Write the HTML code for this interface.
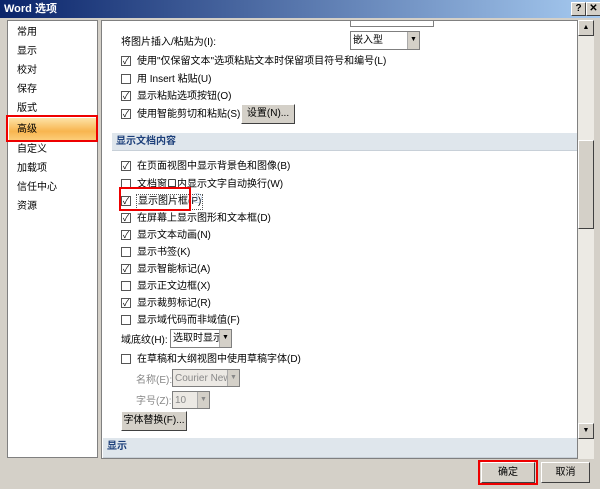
<!DOCTYPE html>
<html><head><meta charset="utf-8"><style>
*{margin:0;padding:0;box-sizing:border-box}
body{width:600px;height:489px;background:#d4d0c8;font-family:"Liberation Sans","Noto Sans CJK SC",sans-serif;font-size:10px;line-height:14px;color:#000;position:relative;overflow:hidden}
.a{position:absolute;white-space:nowrap}
.title{left:0;top:0;width:600px;height:18px;background:linear-gradient(90deg,#0a246a,#a6caf0);color:#fff;font-weight:bold;font-size:11px;padding:2px 4px}
.tb{top:2px;width:15px;height:14px;background:#d4d0c8;border:1px solid;border-color:#fff #404040 #404040 #fff;font-size:10px;font-weight:bold;text-align:center;line-height:12px;color:#000}
.left{left:7px;top:20px;width:91px;height:438px;background:#fff;border:1px solid #808080}
.right{left:101px;top:20px;width:477px;height:439px;background:#fff;border:1px solid #808080;overflow:hidden}
.sb{left:578px;top:20px;width:16px;height:439px;background:#eceae4}
.cb{width:10px;height:10px;border:1px solid #555;background:#fff;font-size:9px;line-height:8px;text-align:center}
.hdr{left:10px;width:700px;height:18px;background:#dfe6ec;border-bottom:1px solid #c8d0d8;color:#1c3f7a;padding:2px 4px;font-weight:bold}
.btn{background:#d4d0c8;border:1px solid;border-color:#fff #404040 #404040 #fff;text-align:center}
.dd{background:#fff;border:1px solid #7f7f7f;padding:2px 2px;overflow:hidden}
.arr{position:absolute;right:0;top:0;width:12px;height:100%;background:#d4d0c8;border-left:1px solid #aaa;font-size:7px;text-align:center;line-height:16px}
.g{color:#888}
.red{border:2px solid #e00}
</style></head><body>
<div class="a title">Word 选项</div>
<div class="a tb" style="left:571px">?</div>
<div class="a tb" style="left:586px">✕</div>
<div class="a left">
<div class="a" style="left:9px;top:5px">常用</div>
<div class="a" style="left:9px;top:24px">显示</div>
<div class="a" style="left:9px;top:43px">校对</div>
<div class="a" style="left:9px;top:62px">保存</div>
<div class="a" style="left:9px;top:81px">版式</div>
<div class="a" style="left:1px;top:97px;width:88px;height:22px;background:linear-gradient(#fde3a7,#f8b54f 60%,#fccd78)"></div>
<div class="a" style="left:9px;top:102px">高级</div>
<div class="a" style="left:9px;top:122px">自定义</div>
<div class="a" style="left:9px;top:141px">加载项</div>
<div class="a" style="left:9px;top:160px">信任中心</div>
<div class="a" style="left:9px;top:179px">资源</div>
</div>
<div class="a red" style="left:6px;top:115px;width:92px;height:27px"></div>
<div class="a right">
<div class="a dd" style="left:248px;top:-4px;width:84px;height:10px"></div>
<div class="a" style="left:19px;top:15px">将图片插入/粘贴为(I):</div>
<div class="a dd" style="left:248px;top:10px;width:70px;height:19px">嵌入型<div class="arr">▼</div></div>
<div class="a cb" style="left:19px;top:35px">✓</div><div class="a" style="left:35px;top:34px">使用"仅保留文本"选项粘贴文本时保留项目符号和编号(L)</div>
<div class="a cb" style="left:19px;top:53px"></div><div class="a" style="left:35px;top:52px">用 Insert 粘贴(U)</div>
<div class="a cb" style="left:19px;top:70px">✓</div><div class="a" style="left:35px;top:69px">显示粘贴选项按钮(O)</div>
<div class="a cb" style="left:19px;top:88px">✓</div><div class="a" style="left:35px;top:87px">使用智能剪切和粘贴(S) <span style="color:#6a9ad8">ⓘ</span></div>
<div class="a btn" style="left:139px;top:83px;width:54px;height:20px;line-height:18px">设置(N)...</div>
<div class="a hdr" style="top:112px">显示文档内容</div>
<div class="a cb" style="left:19px;top:140px">✓</div><div class="a" style="left:35px;top:139px">在页面视图中显示背景色和图像(B)</div>
<div class="a cb" style="left:19px;top:158px"></div><div class="a" style="left:35px;top:157px">文档窗口内显示文字自动换行(W)</div>
<div class="a cb" style="left:19px;top:175px">✓</div><div class="a" style="left:34px;top:173px;border:1px dotted #555;padding:0 1px">显示图片框(P)</div><div class="a" style="left:90px;top:172px;color:#6a9ad8">ⓘ</div>
<div class="a cb" style="left:19px;top:192px">✓</div><div class="a" style="left:35px;top:191px">在屏幕上显示图形和文本框(D)</div>
<div class="a cb" style="left:19px;top:209px">✓</div><div class="a" style="left:35px;top:208px">显示文本动画(N)</div>
<div class="a cb" style="left:19px;top:226px"></div><div class="a" style="left:35px;top:225px">显示书签(K)</div>
<div class="a cb" style="left:19px;top:243px">✓</div><div class="a" style="left:35px;top:242px">显示智能标记(A)</div>
<div class="a cb" style="left:19px;top:260px"></div><div class="a" style="left:35px;top:259px">显示正文边框(X)</div>
<div class="a cb" style="left:19px;top:277px">✓</div><div class="a" style="left:35px;top:276px">显示裁剪标记(R)</div>
<div class="a cb" style="left:19px;top:294px"></div><div class="a" style="left:35px;top:293px">显示域代码而非域值(F)</div>
<div class="a" style="left:19px;top:313px">域底纹(H):</div>
<div class="a dd" style="left:68px;top:308px;width:62px;height:19px">选取时显示<div class="arr">▼</div></div>
<div class="a cb" style="left:19px;top:333px"></div><div class="a" style="left:35px;top:332px">在草稿和大纲视图中使用草稿字体(D)</div>
<div class="a g" style="left:34px;top:353px">名称(E):</div>
<div class="a dd g" style="left:70px;top:348px;width:68px;height:18px;background:#ece9e4">Courier New<div class="arr">▼</div></div>
<div class="a g" style="left:34px;top:374px">字号(Z):</div>
<div class="a dd g" style="left:70px;top:370px;width:38px;height:18px;background:#ece9e4">10<div class="arr">▼</div></div>
<div class="a btn" style="left:19px;top:390px;width:66px;height:20px;line-height:18px">字体替换(F)...</div>
<div class="a hdr" style="left:1px;top:417px;height:20px">显示</div>
</div>
<div class="a red" style="left:119px;top:187px;width:72px;height:24px"></div>
<div class="a sb">
<div class="a btn" style="left:0;top:0;width:16px;height:16px;font-size:7px;line-height:14px">▲</div>
<div class="a btn" style="left:0;top:120px;width:16px;height:89px"></div>
<div class="a btn" style="left:0;top:403px;width:16px;height:16px;font-size:7px;line-height:14px">▼</div>
</div>
<div class="a btn" style="left:481px;top:462px;width:54px;height:21px;line-height:19px">确定</div>
<div class="a red" style="left:478px;top:460px;width:60px;height:25px"></div>
<div class="a btn" style="left:541px;top:462px;width:49px;height:21px;line-height:19px">取消</div>
</body></html>
